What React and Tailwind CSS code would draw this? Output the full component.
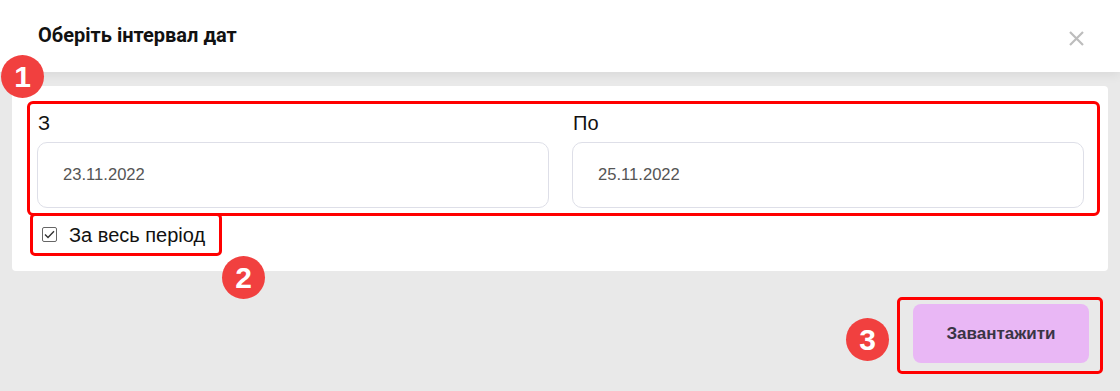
import React from "react";

function Badge({ n, className }) {
  return (
    <div
      className={`absolute z-20 w-[43px] h-[43px] rounded-full bg-[#f1403f] text-white flex items-center justify-center text-[30px] font-bold leading-none font-['Liberation_Sans',Arial,sans-serif] ${className}`}
    >
      {n}
    </div>
  );
}

function DateField({ label, value }) {
  return (
    <div className="flex flex-col">
      <div className="text-[20px] leading-[24px] text-[#111] pl-[1px]">{label}</div>
      <div className="mt-[7px] h-[66px] border border-[#dedfe8] rounded-[10px] flex items-center pl-[25px] text-[16.6px] text-[#555]">
        {value}
      </div>
    </div>
  );
}

export default function App() {
  return (
    <div className="relative w-[1120px] h-[391px] overflow-hidden bg-[#e9e9e9] font-['Liberation_Sans',Arial,sans-serif]">
      <header className="relative z-10 h-[72px] bg-white flex items-center justify-between pl-[38px] pr-[36px] shadow-[0_3px_10px_rgba(0,0,0,0.07)]">
        <h1 className="font-['Roboto',sans-serif] font-bold text-[20px] text-[#111] -mt-[2px]">
          Оберіть інтервал дат
        </h1>
        <svg width="15" height="15" viewBox="0 0 15 15" className="mt-[4px]">
          <path d="M1 1L14 14M14 1L1 14" stroke="#bdbdbd" strokeWidth="2.2" />
        </svg>
      </header>

      <main className="px-[12px] pt-[14px]">
        <section className="bg-white rounded-[4px] h-[185px] pt-[15px] pl-[15px]">
          <div className="w-[1073px] h-[115px] border-[3px] border-[#ff0000] rounded-[6px] pt-[7px] pl-[7px] pr-[13px] grid grid-cols-2 gap-[23px]">
            <DateField label="З" value="23.11.2022" />
            <DateField label="По" value="25.11.2022" />
          </div>
          <div className="-mt-[3px] ml-[3px] w-[192px] h-[43px] border-[3px] border-[#ff0000] rounded-[5px] flex items-center pl-[9px]">
            <div className="w-[15px] h-[15px] border border-[#666] rounded-[2px] flex items-center justify-center">
              <svg width="11" height="9" viewBox="0 0 11 9">
                <path d="M1 4.5L4 7.5L10 1.2" stroke="#333" strokeWidth="1.4" fill="none" />
              </svg>
            </div>
            <span className="ml-[12px] text-[20px] text-[#111]">За весь період</span>
          </div>
        </section>
      </main>

      <div className="flex justify-end pr-[17px] mt-[26px]">
        <div className="w-[206px] h-[77px] border-[3px] border-[#ff0000] rounded-[5px] pt-[4px] pl-[13px] pr-[11px]">
          <button className="w-full h-[59px] bg-[#e9b7f5] rounded-[8px] text-[17px] font-bold text-[#3a3545]">
            Завантажити
          </button>
        </div>
      </div>

      <Badge n="1" className="left-[1px] top-[55px]" />
      <Badge n="2" className="left-[222px] top-[256px]" />
      <Badge n="3" className="left-[846px] top-[318px]" />
    </div>
  );
}
